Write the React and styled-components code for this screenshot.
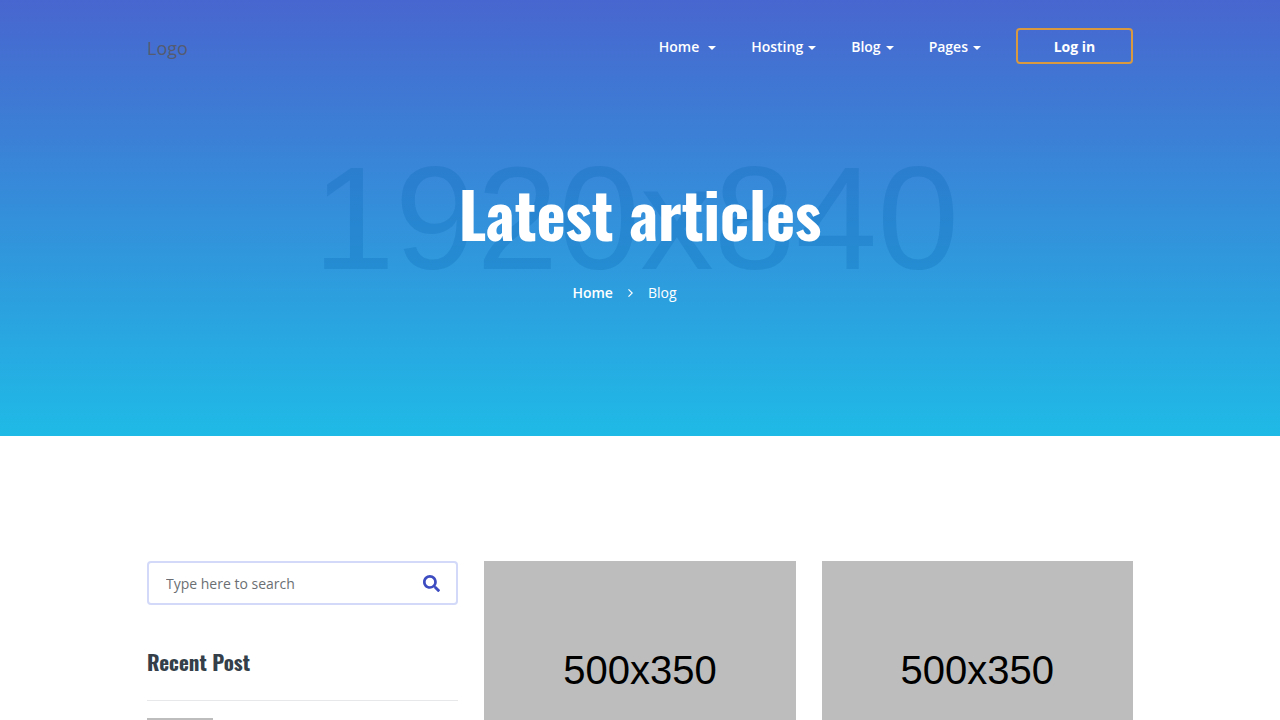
import React, { useState } from 'react'
import styled, { createGlobalStyle } from "styled-components"
import { FaSearch } from "react-icons/fa"

const GlobalStyle = createGlobalStyle`
* {
  box-sizing: border-box;
}
body {
  margin: 0;
  background: #fff;
  color: #555b60;
  font-family: 'Open Sans', sans-serif;
  font-size: 14px;
  line-height: 24px;
}
`
const Container = styled.div`
width: 100%;
max-width: 1018px;
margin: 0 auto;
padding: 0 16px;
`
const Hero = styled.section`
position: relative;
overflow: hidden;
padding: 28px 0 131px;
background: linear-gradient(180deg, #4866cf 0%, #1fbae6 100%);
`
// size label of the background placeholder, sits behind the title
const HeroBackdrop = styled.span`
position: absolute;
inset: 0;
display: flex;
align-items: center;
justify-content: center;
padding-right: 8px;
font-family: 'Liberation Sans', Arial, sans-serif;
font-size: 147px;
color: rgba(0, 95, 175, 0.22);
`
const HeroContent = styled(Container)`
position: relative;
`
const Header = styled.header`
display: flex;
align-items: center;
justify-content: space-between;
`
const Logo = styled.a`
padding-top: 4px;
font-size: 18px;
color: #555b70;
text-decoration: none;
`
const Nav = styled.nav`
display: flex;
align-items: center;
gap: 35px;
`
const NavLink = styled.a`
display: flex;
align-items: center;
gap: ${(props) => (props.$wide ? '9px' : '5px')};
padding-top: 2px;
font-weight: 600;
color: #fff;
text-decoration: none;
`
const Caret = styled.span`
margin-top: 2px;
border-top: 4px solid #fff;
border-left: 4px solid transparent;
border-right: 4px solid transparent;
`
const LoginBtn = styled.button`
width: 117px;
height: 36px;
background: transparent;
border: 2px solid #d9993f;
border-radius: 4px;
font-family: inherit;
font-size: 14px;
font-weight: 700;
color: #fff;
cursor: pointer;
`
const Title = styled.h1`
margin: 109px 0 28px;
font-family: 'Oswald', 'Liberation Sans Narrow', 'Liberation Sans', sans-serif;
font-size: 62px;
line-height: 80px;
font-weight: 700;
text-align: center;
color: #fff;
`
const Breadcrumb = styled.ol`
display: flex;
align-items: center;
justify-content: center;
gap: 15px;
margin: 0;
padding: 0 31px 0 0;
list-style: none;
color: #fff;
`
const Crumb = styled.li`
display: flex;
align-items: center;
`
const CrumbLink = styled.a`
font-weight: 600;
color: #fff;
text-decoration: none;
`
const Main = styled.main`
display: grid;
grid-template-columns: repeat(3, 1fr);
gap: 26px;
padding: 125px 0;
`
const SearchForm = styled.form`
display: flex;
align-items: center;
height: 44px;
padding: 0 16px 0 17px;
border: 2px solid #d3d9f8;
border-radius: 4px;
`
const SearchInput = styled.input`
flex: 1;
min-width: 0;
padding: 0;
border: none;
outline: none;
background: transparent;
font-family: inherit;
font-size: 14px;
color: #555b60;
&::placeholder {
  color: #6b6f73;
  opacity: 1;
}
`
const SearchBtn = styled.button`
display: flex;
padding: 0;
border: none;
background: transparent;
font-size: 17px;
color: #3d4cc0;
cursor: pointer;
`
const WidgetTitle = styled.h2`
margin: 41px 0 0;
padding-bottom: 22px;
border-bottom: 1px solid #e6e8ea;
font-family: 'Oswald', 'Liberation Sans Narrow', 'Liberation Sans', sans-serif;
font-size: 21px;
line-height: 32px;
font-weight: 700;
color: #343f4a;
`
const Thumb = styled.div`
width: 66px;
height: 66px;
margin-top: 17px;
background: #bdbdbd;
`
const PostImage = styled.a`
display: flex;
align-items: center;
justify-content: center;
aspect-ratio: 500 / 350;
background: #bdbdbd;
font-family: 'Liberation Sans', Arial, sans-serif;
font-size: 40px;
color: #000;
text-decoration: none;
`

const menu = [
  { label: 'Home', wide: true },
  { label: 'Hosting' },
  { label: 'Blog' },
  { label: 'Pages' },
]
const posts = ['post-1', 'post-2']

export default function App() {
  const [search, setSearch] = useState('')

  return (
    <>
    <GlobalStyle />
    <Hero>
      <HeroBackdrop aria-hidden="true">1920x840</HeroBackdrop>
      <HeroContent>
        <Header>
          <Logo href="#">Logo</Logo>
          <Nav>
            {menu.map((item) => (
              <NavLink key={item.label} href="#" $wide={item.wide}>
                {item.label}
                <Caret />
              </NavLink>
            ))}
            <LoginBtn type="button">Log in</LoginBtn>
          </Nav>
        </Header>
        <Title>Latest articles</Title>
        <Breadcrumb>
          <Crumb><CrumbLink href="#">Home</CrumbLink></Crumb>
          <Crumb aria-hidden="true">
            <svg width="5" height="8" viewBox="0 0 5 8" fill="none" stroke="#fff" strokeWidth="1.2">
              <path d="M0.5 0.4 L4.2 4 L0.5 7.6" />
            </svg>
          </Crumb>
          <Crumb>Blog</Crumb>
        </Breadcrumb>
      </HeroContent>
    </Hero>
    <Container>
      <Main>
        <aside>
          <SearchForm onSubmit={(e) => e.preventDefault()}>
            <SearchInput
              type="text"
              name="search"
              aria-label="Search"
              placeholder="Type here to search"
              value={search}
              onChange={(e) => setSearch(e.target.value)}/>
            <SearchBtn type="submit" aria-label="Submit search"><FaSearch /></SearchBtn>
          </SearchForm>
          <WidgetTitle>Recent Post</WidgetTitle>
          <Thumb />
        </aside>
        {posts.map((post) => (
          <article key={post}>
            <PostImage href="#">500x350</PostImage>
          </article>
        ))}
      </Main>
    </Container>
    </>
  )
}
